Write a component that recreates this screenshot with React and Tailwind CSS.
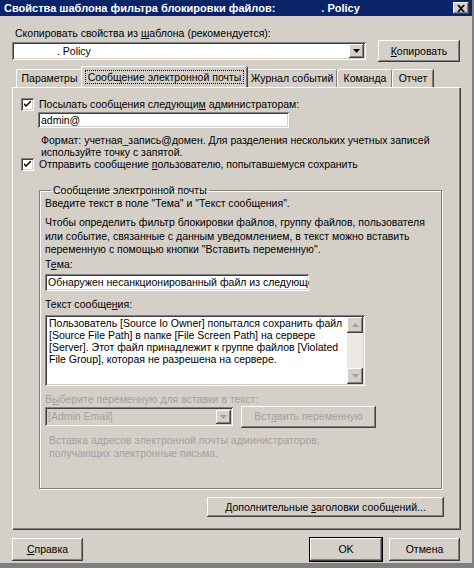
import React from 'react';

const raised = 'shadow-[inset_-1px_-1px_#404040,inset_1px_1px_#ffffff,inset_-2px_-2px_#808080,inset_2px_2px_#d4d0c8]';
const sunken = 'shadow-[inset_1px_1px_#808080,inset_-1px_-1px_#ffffff,inset_2px_2px_#404040,inset_-2px_-2px_#d4d0c8]';

function Check() {
  return (
    <span className={`w-[13px] h-[13px] bg-white ${sunken} flex items-center justify-center shrink-0`}>
      <svg width="7" height="7" viewBox="0 0 7 7">
        <path d="M0 2 L0 4 L2 6 L7 1 L7 -1 L2 4 Z" fill="#000" />
      </svg>
    </span>
  );
}

function Arrow({ up, disabled }) {
  const c = disabled ? '#a0a0a0' : '#000';
  return (
    <svg width="7" height="4" viewBox="0 0 7 4">
      <path d={up ? 'M3.5 0 L7 4 L0 4 Z' : 'M0 0 L7 0 L3.5 4 Z'} fill={c} />
    </svg>
  );
}

function Button({ children, className = '', disabled }) {
  return (
    <div className={`bg-[#d4d0c8] ${raised} flex items-center justify-center whitespace-nowrap ${disabled ? 'text-[#a0a0a0]' : 'text-black'} ${className}`}>
      {children}
    </div>
  );
}

function Combo({ text, className = '', disabled }) {
  return (
    <div className={`${sunken} ${disabled ? 'bg-[#d4d0c8] text-[#a0a0a0]' : 'bg-white'} flex items-center pl-[3px] pr-[2px] ${className}`}>
      <span className="flex-1 whitespace-nowrap overflow-hidden">{text}</span>
      <span className={`w-[15px] h-[14px] bg-[#d4d0c8] ${raised} flex items-center justify-center`}>
        <Arrow disabled={disabled} />
      </span>
    </div>
  );
}

const tabs = ['Параметры', 'Сообщение электронной почты', 'Журнал событий', 'Команда', 'Отчет'];
const tabW = ['w-[66px]', 'w-[166px]', 'w-[91px]', 'w-[55px]', 'w-[41px]'];

export default function App() {
  return (
    <div className="w-[474px] h-[568px] bg-[#d4d0c8] text-[10.5px] leading-[13px] text-black overflow-hidden border-r-2 border-b-[5px] border-[#808080] whitespace-nowrap" style={{ fontFamily: '"Liberation Sans", Arial, sans-serif' }}>
      {/* Title bar */}
      <div className="h-[16px] bg-[#0a246a] flex items-center pl-[4px] pr-[3px]">
        <span className="flex-1 text-white font-bold text-[11px] leading-[16px]">
          Свойства шаблона фильтра блокировки файлов:<span className="inline-block w-[46px]" />. Policy
        </span>
        <span className={`w-[16px] h-[12px] bg-[#d4d0c8] ${raised} flex items-center justify-center`}>
          <svg width="8" height="7" viewBox="0 0 8 7">
            <path d="M0 0 L2 0 L4 2 L6 0 L8 0 L5 3.5 L8 7 L6 7 L4 5 L2 7 L0 7 L3 3.5 Z" fill="#000" />
          </svg>
        </span>
      </div>

      <div className="px-[12px]">
        <div className="mt-[11px] pl-[3px]">Скопировать свойства из <u>ш</u>аблона (рекомендуется):</div>
        <div className="mt-[0px] flex items-center">
          <Combo text={<><span className="inline-block w-[42px]" />. Policy</>} className="w-[354px] h-[18px]" />
          <div className="flex-1" />
          <Button className="w-[82px] h-[22px]"><span><u>К</u>опировать</span></Button>
        </div>

        {/* Tabs */}
        <div className="mt-[5px] h-[20px] flex items-end pl-[4px]">
          {tabs.map((t, i) => (
            <div
              key={t}
              className={`${tabW[i]} ${i === 1 ? 'h-[21px] -mx-[1px] z-10 bg-[#d4d0c8]' : 'h-[18px]'} border-t border-l border-white shadow-[inset_-1px_0_#808080,1px_0_#404040] rounded-t-[2px] flex items-center justify-center`}
            >
              {i === 1 ? <span className="border border-dotted border-black px-[2px] leading-[12px]">{t}</span> : t}
            </div>
          ))}
        </div>

        {/* Tab panel */}
        <div className="h-[442px] border-l border-t border-white shadow-[inset_-1px_-1px_#808080,1px_1px_#404040] pt-[10px] pl-[8px] pr-[18px]">
          <div className="flex items-center gap-[5px]">
            <Check />
            <span>Посылать сообщения следующи<u>м</u> администраторам:</span>
          </div>
          <div className={`ml-[17px] mt-[1px] w-[251px] h-[16px] bg-white ${sunken} flex items-center pl-[3px]`}>admin@</div>
          <div className="ml-[20px] mt-[6px] leading-[12px]">
            Формат: учетная_запись@домен. Для разделения нескольких учетных записей<br />используйте точку с запятой.
          </div>
          <div className="flex items-center gap-[5px] mt-[0px]">
            <Check />
            <span>Отправить сообщение <u>п</u>ользователю, попытавшемуся сохранить</span>
          </div>

          {/* Group box */}
          <fieldset className="ml-[18px] mt-[13px] h-[305px] border border-[#808080] shadow-[inset_1px_1px_#ffffff,1px_1px_#ffffff] pl-[5px] pr-[6px]">
            <legend className="px-[2px] ml-[6px] leading-[13px]">Сообщение электронной почты</legend>
            <div className="mt-[0px]">Введите текст в поле "Тема" и "Текст сообщения".</div>
            <div className="mt-[6px] leading-[13.5px]">
              Чтобы определить фильтр блокировки файлов, группу файлов, пользователя<br />
              или событие, связанные с данным уведомлением, в текст можно вставить<br />
              переменную с помощью кнопки "Вставить переменную".
            </div>
            <div className="mt-[1px]">Т<u>е</u>ма:</div>
            <div className={`mt-[3px] w-[264px] h-[17px] bg-white ${sunken} flex items-center pl-[3px] overflow-hidden`}>
              Обнаружен несанкционированный файл из следующей группы
            </div>
            <div className="mt-[7px]">Текст сообще<u>н</u>ия:</div>
            <div className={`mt-[4px] w-[320px] h-[71px] bg-white ${sunken} flex p-[2px]`}>
              <div className="flex-1 pl-[2px] leading-[12px] overflow-hidden">
                Пользователь [Source Io Owner] попытался сохранить файл<br />
                [Source File Path] в папке [File Screen Path] на сервере<br />
                [Server]. Этот файл принадлежит к группе файлов [Violated<br />
                File Group], которая не разрешена на сервере.
              </div>
              <div className="w-[16px] bg-[#ebe9e5] flex flex-col justify-between">
                <span className={`h-[16px] bg-[#d4d0c8] ${raised} flex items-center justify-center`}><Arrow up disabled /></span>
                <span className={`h-[16px] bg-[#d4d0c8] ${raised} flex items-center justify-center`}><Arrow disabled /></span>
              </div>
            </div>
            <div className="mt-[7px] text-[#a0a0a0]">В<u>ы</u>берите переменную для вставки в текст:</div>
            <div className="mt-[0px] flex items-center gap-[8px]">
              <Combo text="[Admin Email]" disabled className="w-[188px] h-[19px]" />
              <Button disabled className="w-[135px] h-[22px]"><span>Вст<u>а</u>вить переменную</span></Button>
            </div>
            <div className="mt-[6px] ml-[4px] text-[#a0a0a0] leading-[13px]">
              Вставка адресов электронной почты администраторов,<br />получающих электронные письма.
            </div>
          </fieldset>

          <div className="flex justify-end mt-[8px] -mr-[2px]">
            <Button className="w-[237px] h-[20px]"><span>Дополнительные <u>з</u>аголовки сообщений...</span></Button>
          </div>
        </div>

        {/* Bottom buttons */}
        <div className="mt-[9px] flex items-center">
          <Button className="w-[71px] h-[23px]"><span><u>С</u>правка</span></Button>
          <div className="flex-1" />
          <Button className="w-[72px] h-[23px] outline outline-1 outline-black">OK</Button>
          <Button className="w-[71px] h-[23px] ml-[7px]">Отмена</Button>
        </div>
      </div>
    </div>
  );
}
